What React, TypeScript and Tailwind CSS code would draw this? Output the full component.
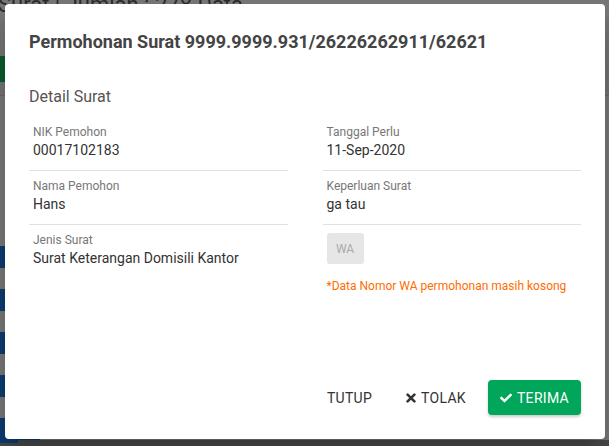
import React from "react";
import { FaCheck } from "react-icons/fa";

const font = { fontFamily: "Roboto, 'Liberation Sans', sans-serif" };

function Item({ label, value, border = true }: { label: string; value: string; border?: boolean }) {
  return (
    <div className={`px-1 pt-[7px] pb-[10px] ${border ? "border-b border-[#e0e0e0]" : ""}`}>
      <div className="text-xs leading-4 text-[#777]">{label}</div>
      <div className="text-sm leading-5 text-[#333]">{value}</div>
    </div>
  );
}

export default function App() {
  const rows = [0, 1, 2, 3, 4];
  return (
    <div className="relative w-[609px] h-[446px] overflow-hidden bg-[#777]" style={font}>
      {/* backdrop page content (dimmed) */}
      <div className="flex flex-col h-full">
        <div className="h-[30px] -mt-[10px] text-[22px] leading-[30px] text-[#2b2b2b] whitespace-nowrap -ml-[2px]">
          Surat | Jumlah : 278 Data
        </div>
        <div className="h-[77px] bg-[#737373] border-b border-[#666] flex flex-col">
          <div className="h-[26px] w-[40px] bg-[#0b5a2c] mt-[36px]" />
        </div>
        <div className="h-[151px] bg-[#777]" />
        <div className="flex flex-col gap-[21px]">
          {rows.map((r) => (
            <div key={r} className="h-[22px] w-[40px] bg-[#0e3b6f]" />
          ))}
        </div>
        <div className="mt-auto h-[6px] bg-[#4a4a4a] flex">
          <div className="w-[18px] h-[3px] bg-[#0e3b6f]" />
        </div>
      </div>

      {/* modal */}
      <div className="absolute left-[5px] top-[4px] w-[600px] h-[435px] bg-white rounded-[4px] shadow-[0_11px_15px_-7px_rgba(0,0,0,0.2),0_24px_38px_3px_rgba(0,0,0,0.14)] flex flex-col px-6 pt-[22px] pb-[24px]">
        <div className="text-[18px] leading-8 font-bold text-[#444] whitespace-nowrap">
          Permohonan Surat 9999.9999.931/26226262911/62621
        </div>
        <div className="mt-[27px] text-base leading-6 text-[#555]">Detail Surat</div>
        <div className="mt-[8px] grid grid-cols-2 gap-x-[35px]">
          <div className="flex flex-col">
            <Item label="NIK Pemohon" value="00017102183" />
            <Item label="Nama Pemohon" value="Hans" />
            <Item label="Jenis Surat" value="Surat Keterangan Domisili Kantor" border={false} />
          </div>
          <div className="flex flex-col">
            <Item label="Tanggal Perlu" value="11-Sep-2020" />
            <Item label="Keperluan Surat" value="ga tau" />
            <div className="px-1 pt-[8px]">
              <div className="w-[37px] h-[31px] rounded-[3px] bg-[#e6e6e6] text-[12px] text-[#aaa] flex items-center justify-center">
                WA
              </div>
              <div className="mt-[14px] text-xs leading-4 text-[#ff6d00]">
                *Data Nomor WA permohonan masih kosong
              </div>
            </div>
          </div>
        </div>
        <div className="mt-auto flex justify-end gap-[10px]">
          <button className="h-[35px] px-3 text-sm font-normal tracking-[0.3px] text-[#333] uppercase rounded">Tutup</button>
          <button className="h-[35px] px-3 text-sm font-normal tracking-[0.3px] text-[#333] uppercase rounded flex items-center gap-[5px]">
            <svg width="10" height="10" viewBox="0 0 10 10" className="shrink-0">
              <path d="M1.6 1.6 L8.4 8.4 M8.4 1.6 L1.6 8.4" stroke="#333" strokeWidth="2.6" strokeLinecap="round" fill="none" />
            </svg>
            Tolak
          </button>
          <button className="h-[35px] px-3 text-sm font-normal tracking-[0.3px] text-white uppercase rounded bg-[#00a65a] shadow-[0_2px_3px_rgba(0,0,0,0.2)] flex items-center gap-[5px]">
            <FaCheck className="w-[12px] h-[12px]" />
            Terima
          </button>
        </div>
      </div>
    </div>
  );
}
